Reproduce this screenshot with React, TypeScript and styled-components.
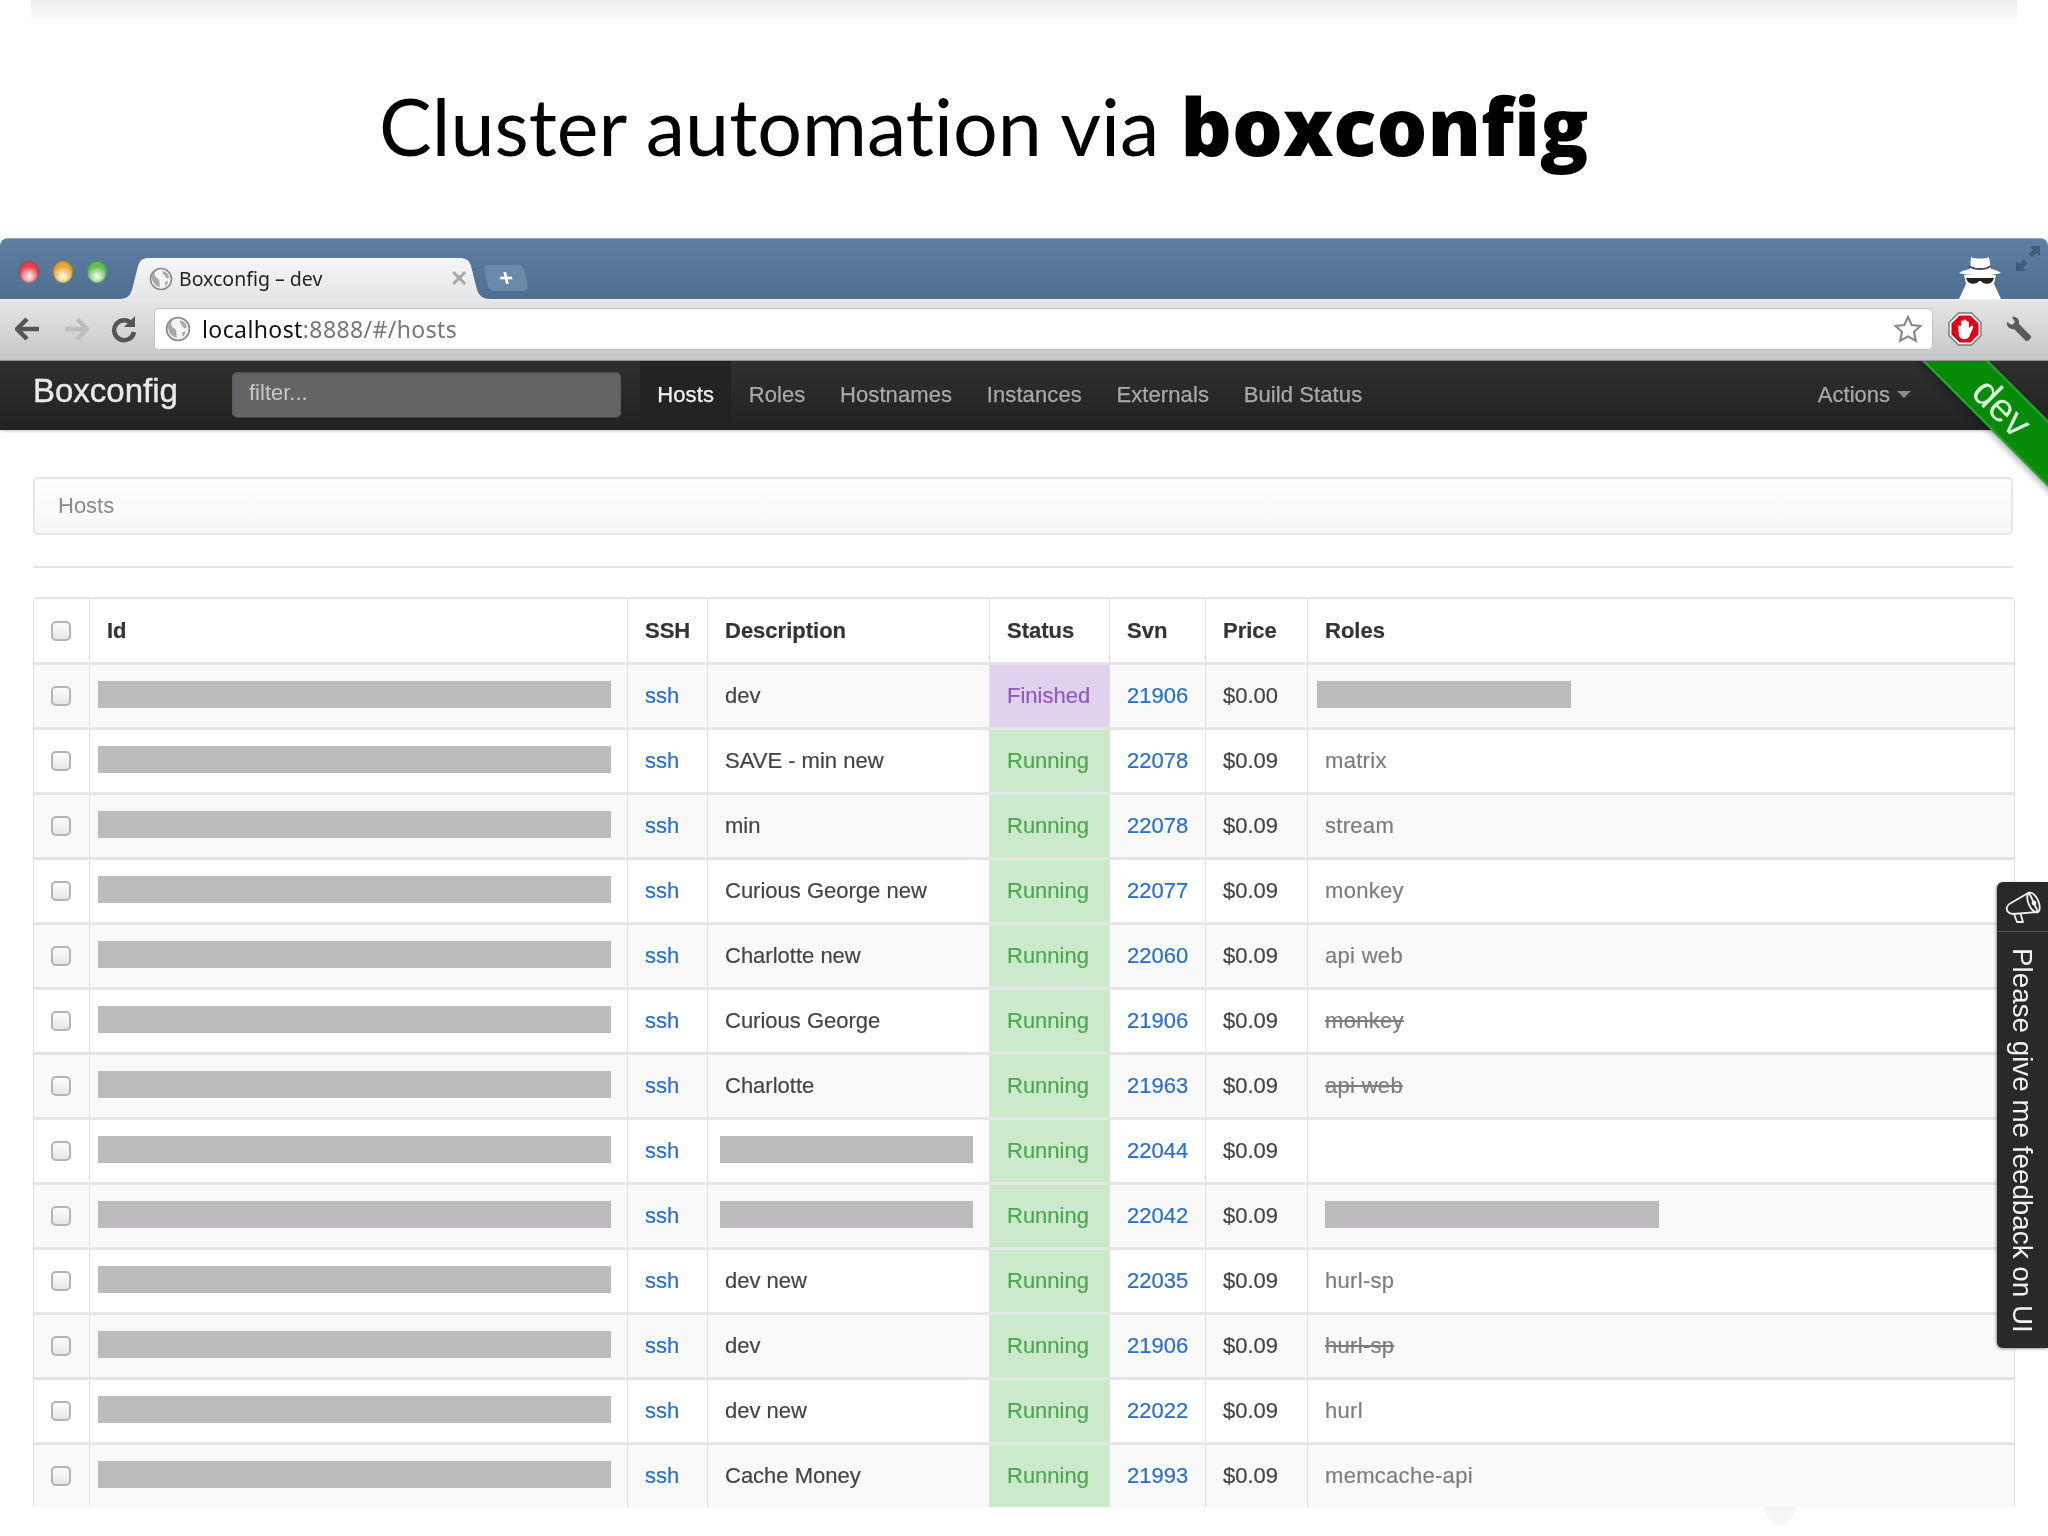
import React from "react";
import styled, { createGlobalStyle } from "styled-components";

interface HostRow {
  desc?: string;
  status: "Running" | "Finished";
  svn: string;
  price: string;
  role?: string;
  struck?: boolean;
  roleBlock?: { left: number; width: number };
}

const rows: HostRow[] = [
  { desc: "dev", status: "Finished", svn: "21906", price: "$0.00", roleBlock: { left: -8, width: 254 } },
  { desc: "SAVE - min new", status: "Running", svn: "22078", price: "$0.09", role: "matrix" },
  { desc: "min", status: "Running", svn: "22078", price: "$0.09", role: "stream" },
  { desc: "Curious George new", status: "Running", svn: "22077", price: "$0.09", role: "monkey" },
  { desc: "Charlotte new", status: "Running", svn: "22060", price: "$0.09", role: "api web" },
  { desc: "Curious George", status: "Running", svn: "21906", price: "$0.09", role: "monkey", struck: true },
  { desc: "Charlotte", status: "Running", svn: "21963", price: "$0.09", role: "api web", struck: true },
  { status: "Running", svn: "22044", price: "$0.09" },
  { status: "Running", svn: "22042", price: "$0.09", roleBlock: { left: 0, width: 334 } },
  { desc: "dev new", status: "Running", svn: "22035", price: "$0.09", role: "hurl-sp" },
  { desc: "dev", status: "Running", svn: "21906", price: "$0.09", role: "hurl-sp", struck: true },
  { desc: "dev new", status: "Running", svn: "22022", price: "$0.09", role: "hurl" },
  { desc: "Cache Money", status: "Running", svn: "21993", price: "$0.09", role: "memcache-api" },
];

const navLinks = ["Hosts", "Roles", "Hostnames", "Instances", "Externals", "Build Status"];
const columns = [55, 538, 80, 282, 120, 96, 102, 707];

const Globe: React.FC<{ size: number }> = ({ size }) => (
  <svg width={size} height={size} viewBox="0 0 24 24">
    <circle cx="12" cy="12" r="10.5" fill="#f4f4f4" stroke="#8a8a8a" strokeWidth="1.6" />
    <path d="M8 3c-2 2-3 4-2 6s3 2 4 4 0 4 1 7c-3 0-7-3-8-8s2-8 5-9z" fill="#a8a8a8" />
    <path d="M14 4c3 1 6 3 6 7-2 1-3 0-4-2s-3-2-2-5zM16 15l3-1c0 2-1 4-3 5z" fill="#a8a8a8" />
  </svg>
);

const GlobalStyle = createGlobalStyle`
  html, body {
    margin: 0;
    background: #fff;
  }
  body {
    font-family: "Liberation Sans", Arial, sans-serif;
    height: 1536px;
    overflow: hidden;
  }
`;

const TopBand = styled.div`
  height: 19px;
  margin: 0 31px;
  background: linear-gradient(#eeeeee, #fafafa);
`;

const Slide = styled.h1`
  height: 219px;
  margin: 0;
  padding: 58px 0 0 379px;
  box-sizing: border-box;
  font-family: Lato, "Open Sans", sans-serif;
  font-size: 79px;
  line-height: 96px;
  font-weight: 400;
  font-variant-ligatures: none;
  color: #000;
  b {
    font-family: "Open Sans", Lato, sans-serif;
    font-size: 80px;
    font-weight: 800;
    margin-left: 1px;
  }
`;

const Browser = styled.div`
  position: relative;
  height: 1298px;
  overflow: hidden;
  border-radius: 8px 8px 0 0;
  filter: blur(0.35px);
`;

const TitleBar = styled.div`
  height: 61px;
  display: flex;
  align-items: flex-end;
  padding-left: 19px;
  background: linear-gradient(#5e7fa1, #4e6e92);
  border-top: 1px solid #8aa3bc;
  box-sizing: border-box;
`;

const Lights = styled.div`
  display: flex;
  gap: 14px;
  margin-bottom: 16px;
`;

const Light = styled.span<{ $color: string }>`
  width: 20px;
  height: 22px;
  border-radius: 50%;
  background: radial-gradient(circle at 50% 70%, #fff 0, ${(p) => p.$color} 55%);
  box-shadow: inset 0 0 0 1px rgba(0, 0, 0, 0.18);
`;

const Tab = styled.div`
  width: 371px;
  height: 41px;
  margin-left: 12px;
  padding: 0 22px 0 30px;
  box-sizing: border-box;
  display: flex;
  align-items: center;
  gap: 6px;
  color: #222;
  background: linear-gradient(#f7f7f7, #e5e5e5);
  clip-path: path("M0 41 C10 41 12 36 14 28 L19 8 C21 2 24 0 30 0 L340 0 C347 0 350 2 352 8 L357 28 C359 36 362 41 371 41 Z");
`;

const TabLabel = styled.span`
  flex: 1;
  font-family: "Noto Sans", sans-serif;
  font-size: 19.5px;
`;

const TabClose = styled.span`
  color: #a8a8a8;
  font-size: 22px;
  font-weight: 700;
`;

const NewTab = styled.div`
  width: 40px;
  height: 26px;
  margin: 0 0 8px -4px;
  display: flex;
  align-items: center;
  justify-content: center;
  color: #fff;
  font-size: 24px;
  font-weight: 700;
  background: #6b8aa9;
  border-radius: 5px 5px 6px 6px;
  transform: skewX(12deg);
`;

const TitleRight = styled.div`
  margin-left: auto;
  align-self: stretch;
  display: flex;
  align-items: flex-end;
  gap: 10px;
  padding-right: 7px;
`;

const Fullscreen = styled.svg`
  align-self: flex-start;
  margin-top: 6px;
`;

const Toolbar = styled.div`
  height: 62px;
  display: flex;
  align-items: center;
  padding: 0 0 2px 15px;
  box-sizing: border-box;
  background: linear-gradient(#e6e6e6, #c6c6c6);
  border-top: 1px solid #e8eef2;
  border-bottom: 1px solid #9a9a9a;
`;

const NavButtons = styled.div`
  display: flex;
  align-items: center;
  gap: 22px;
`;

const AddressBar = styled.div`
  width: 1777px;
  height: 40px;
  margin-left: 18px;
  padding: 0 10px;
  box-sizing: border-box;
  display: flex;
  align-items: center;
  gap: 11px;
  background: #fff;
  border-radius: 4px;
  box-shadow: 0 0 0 1px #c4c4c4;
`;

const Url = styled.span`
  flex: 1;
  font-family: "Noto Sans", sans-serif;
  font-size: 23px;
  letter-spacing: 0.4px;
  color: #777;
  b {
    font-weight: 400;
    color: #111;
  }
`;

const StopSign = styled.svg`
  margin-left: 16px;
`;

const Wrench = styled.svg`
  margin-left: 24px;
`;

const NavBar = styled.div`
  height: 69px;
  display: flex;
  align-items: stretch;
  padding-left: 33px;
  background: linear-gradient(#2f2f2f, #222222);
  color: #a9a9a9;
  box-shadow: 0 1px 3px rgba(0, 0, 0, 0.25);
`;

const Brand = styled.div`
  width: 199px;
  line-height: 59px;
  font-size: 33px;
  color: #eaeaea;
  -webkit-text-stroke: 0.4px #eaeaea;
`;

const FilterInput = styled.div`
  width: 389px;
  height: 45px;
  margin-top: 11px;
  padding-left: 17px;
  box-sizing: border-box;
  font-size: 22px;
  line-height: 41px;
  color: #c8c8c8;
  background: #646365;
  border-radius: 5px;
  box-shadow: 0 1px 0 #444, inset 0 1px 2px rgba(0, 0, 0, 0.25);
`;

const NavLinks = styled.div`
  display: flex;
  margin-left: 19px;
`;

const NavLink = styled.a<{ $active?: boolean }>`
  padding: 0 17.3px;
  font-size: 22px;
  line-height: 67px;
  letter-spacing: 0.1px;
  -webkit-text-stroke: 0.25px currentColor;
  color: ${(p) => (p.$active ? "#f4f4f4" : "#a9a9a9")};
  background: ${(p) => (p.$active ? "#232323" : "transparent")};
`;

const Actions = styled.div`
  margin-left: auto;
  margin-right: 137px;
  padding-bottom: 2px;
  display: flex;
  align-items: center;
  gap: 7px;
  font-size: 22px;
  -webkit-text-stroke: 0.25px currentColor;
`;

const Caret = styled.span`
  width: 0;
  height: 0;
  border-left: 7px solid transparent;
  border-right: 7px solid transparent;
  border-top: 7px solid #8a8a8a;
`;

const RibbonClip = styled.div`
  position: absolute;
  top: 123px;
  right: 0;
  width: 150px;
  height: 150px;
  overflow: hidden;
  pointer-events: none;
`;

const Ribbon = styled.div`
  position: absolute;
  left: -26px;
  top: 23px;
  width: 260px;
  height: 47px;
  transform: rotate(45deg);
  display: flex;
  align-items: center;
  justify-content: center;
  box-sizing: border-box;
  font-size: 40px;
  color: #d8efd8;
  background: #078a0a;
  border-top: 2px solid #2fa32f;
  border-bottom: 2px solid #2fa32f;
  box-shadow: 0 3px 6px rgba(0, 0, 0, 0.3);
`;

const Content = styled.div`
  padding: 47px 35px 0 33px;
`;

const Breadcrumb = styled.div`
  height: 58px;
  padding-left: 23px;
  box-sizing: border-box;
  line-height: 53px;
  font-size: 22px;
  color: #8a8a8a;
  background: linear-gradient(#ffffff, #f7f7f7);
  border: 2px solid #e6e6e6;
  border-radius: 5px;
`;

const Rule = styled.hr`
  margin: 31px 0 29px;
  border: 0;
  border-top: 2px solid #e6e6e6;
`;

const Table = styled.table`
  width: 1980px;
  table-layout: fixed;
  border-collapse: separate;
  border-spacing: 0;
  font-size: 22px;
  color: #444;
  -webkit-text-stroke: 0.2px currentColor;
  border-top: 2px solid #e6e6e6;
  border-left: 1px solid #e2e2e2;
  border-right: 1px solid #e2e2e2;
  border-radius: 5px 5px 0 0;
`;

const Th = styled.th`
  height: 63px;
  padding: 0 0 0 17px;
  box-sizing: border-box;
  text-align: left;
  font-weight: 700;
  color: #333;
  border-left: 1px solid #e2e2e2;
  &:first-child {
    border-left: 0;
  }
`;

const Tr = styled.tr<{ $odd: boolean }>`
  background: ${(p) => (p.$odd ? "#f9f9f9" : "#fff")};
`;

const Td = styled.td<{ $bg?: string }>`
  height: 65px;
  padding: 0 0 0 17px;
  box-sizing: border-box;
  white-space: nowrap;
  border-top: 3px solid #e6e6e6;
  border-left: 1px solid #e2e2e2;
  background: ${(p) => p.$bg || "transparent"};
  &:first-child {
    border-left: 0;
  }
`;

const Checkbox = styled.span`
  display: block;
  width: 20px;
  height: 20px;
  box-sizing: border-box;
  border: 2px solid #b4b4b4;
  border-radius: 5px;
  background: linear-gradient(#fdfdfd, #e6e6e6);
`;

const Redacted = styled.div<{ $left: number; $width: number }>`
  height: 27px;
  width: ${(p) => p.$width}px;
  margin: -3px 0 0 ${(p) => p.$left}px;
  background: #bdbbbd;
`;

const SshLink = styled.a`
  color: #2a6fc9;
`;

const StatusText = styled.span<{ $finished: boolean }>`
  color: ${(p) => (p.$finished ? "#8d5bb8" : "#4fa650")};
`;

const Role = styled.span<{ $struck?: boolean }>`
  color: #7d7d7d;
  letter-spacing: 0.3px;
  text-decoration: ${(p) => (p.$struck ? "line-through" : "none")};
`;

const FeedbackTab = styled.div`
  position: absolute;
  top: 644px;
  right: 0;
  width: 51px;
  height: 466px;
  box-sizing: border-box;
  display: flex;
  flex-direction: column;
  align-items: center;
  color: #f2f2f2;
  background: #29292c;
  border-radius: 6px 0 0 6px;
  box-shadow: -1px 1px 3px rgba(0, 0, 0, 0.4);
`;

const FeedbackIcon = styled.div`
  width: 100%;
  height: 49px;
  flex: none;
  display: flex;
  align-items: center;
  justify-content: center;
  border-bottom: 1px solid #555;
`;

const FeedbackText = styled.div`
  margin-top: 16px;
  writing-mode: vertical-rl;
  white-space: nowrap;
  font-size: 27.8px;
  line-height: 51px;
`;

const GhostMark = styled.svg`
  position: absolute;
  left: 1760px;
  top: 1269px;
`;

const App: React.FC = () => {
  return (
    <>
      <GlobalStyle />
      <TopBand />
      <Slide>
        Cluster automation via <b>boxconfig</b>
      </Slide>
      <Browser>
        <TitleBar>
          <Lights>
            <Light $color="#e8404a" />
            <Light $color="#eba52c" />
            <Light $color="#5fc051" />
          </Lights>
          <Tab>
            <Globe size={24} />
            <TabLabel>Boxconfig – dev</TabLabel>
            <TabClose>✕</TabClose>
          </Tab>
          <NewTab>+</NewTab>
          <TitleRight>
            <svg width="50" height="46" viewBox="0 0 50 46">
              <path d="M15 16 L16 4 C20 6 30 6 34 4 L36 16 C41 17 44 18 46 20 C38 23 12 23 4 20 C6 18 10 17 15 16Z" fill="#fff" />
              <path d="M14 13 C20 17 30 17 36 13" stroke="#4c4c4c" strokeWidth="2" fill="none" />
              <path d="M9 22 L41 22 L39 31 L46 46 L4 46 L11 31Z" fill="#fff" />
              <path d="M11 25 L39 25 L37 29 C33 32 28 31 26 28 L24 28 C22 31 17 32 13 29Z" fill="#222" />
            </svg>
            <Fullscreen width="26" height="27" viewBox="0 0 26 27">
              <path d="M15 1 L25 1 L25 11 L21.5 8 L17 12.5 L13.5 9 L18 4.5Z" fill="#3e5c7c" />
              <path d="M11 26 L1 26 L1 16 L4.5 19 L9 14.5 L12.5 18 L8 22.5Z" fill="#3e5c7c" />
            </Fullscreen>
          </TitleRight>
        </TitleBar>
        <Toolbar>
          <NavButtons>
            <svg width="26" height="26" viewBox="0 0 26 26">
              <path d="M12 3 L2 13 L12 23 M3 13 L24 13" stroke="#555" strokeWidth="4.5" fill="none" />
            </svg>
            <svg width="26" height="26" viewBox="0 0 26 26">
              <path d="M14 3 L24 13 L14 23 M23 13 L2 13" stroke="#bdbdbd" strokeWidth="4.5" fill="none" />
            </svg>
            <svg width="26" height="28" viewBox="0 0 26 28">
              <path d="M21 9 A10 10 0 1 0 23 17" stroke="#555" strokeWidth="4.5" fill="none" />
              <path d="M24 1 L24 12 L13 12Z" fill="#555" />
            </svg>
          </NavButtons>
          <AddressBar>
            <Globe size={26} />
            <Url>
              <b>localhost</b>:8888/#/hosts
            </Url>
            <svg width="28" height="28" viewBox="0 0 28 28">
              <path d="M14 2 L17.7 10 L26.5 11 L20 17 L21.8 25.8 L14 21.4 L6.2 25.8 L8 17 L1.5 11 L10.3 10Z" fill="#fff" stroke="#8a8a8a" strokeWidth="2.2" />
            </svg>
          </AddressBar>
          <StopSign width="34" height="34" viewBox="0 0 34 34">
            <path d="M10.5 1 L23.5 1 L33 10.5 L33 23.5 L23.5 33 L10.5 33 L1 23.5 L1 10.5Z" fill="#fff" stroke="#777" strokeWidth="1.4" />
            <path d="M11.5 3.5 L22.5 3.5 L30.5 11.5 L30.5 22.5 L22.5 30.5 L11.5 30.5 L3.5 22.5 L3.5 11.5Z" fill="#e5001a" />
            <path d="M10 15 C10 13 13 13 13 15 L13 10 C13 8 15.5 8 15.5 10 L15.5 9 C15.5 7 18.5 7 18.5 9 L18.5 10 C18.5 9 21 9 21 11 L21 16 L23 14 C25 13 26 15 25 16 L21 25 C19 28 13 28 11 24Z" fill="#fff" />
          </StopSign>
          <Wrench width="26" height="26" viewBox="0 0 26 26">
            <path d="M1 6 L6 9 L9 6 L6 1 C10 0 14 3 13 8 L25 20 C26 22 22 26 20 25 L8 13 C4 14 0 10 1 6Z" fill="#5a5a5a" />
          </Wrench>
        </Toolbar>
        <NavBar>
          <Brand>Boxconfig</Brand>
          <FilterInput>filter...</FilterInput>
          <NavLinks>
            {navLinks.map((link, i) => (
              <NavLink key={link} $active={i === 0}>
                {link}
              </NavLink>
            ))}
          </NavLinks>
          <Actions>
            Actions
            <Caret />
          </Actions>
        </NavBar>
        <RibbonClip>
          <Ribbon>dev</Ribbon>
        </RibbonClip>
        <Content>
          <Breadcrumb>Hosts</Breadcrumb>
          <Rule />
          <Table>
            <colgroup>
              {columns.map((w, i) => (
                <col key={i} width={w} />
              ))}
            </colgroup>
            <thead>
              <tr>
                <Th>
                  <Checkbox />
                </Th>
                <Th>Id</Th>
                <Th>SSH</Th>
                <Th>Description</Th>
                <Th>Status</Th>
                <Th>Svn</Th>
                <Th>Price</Th>
                <Th>Roles</Th>
              </tr>
            </thead>
            <tbody>
              {rows.map((row, i) => (
                <Tr key={i} $odd={i % 2 === 0}>
                  <Td>
                    <Checkbox />
                  </Td>
                  <Td>
                    <Redacted $left={-9} $width={513} />
                  </Td>
                  <Td>
                    <SshLink>ssh</SshLink>
                  </Td>
                  <Td>{row.desc ? row.desc : <Redacted $left={-5} $width={253} />}</Td>
                  <Td $bg={row.status === "Finished" ? "#e0d2ee" : "#cbe9cb"}>
                    <StatusText $finished={row.status === "Finished"}>{row.status}</StatusText>
                  </Td>
                  <Td>
                    <SshLink>{row.svn}</SshLink>
                  </Td>
                  <Td>{row.price}</Td>
                  <Td>
                    {row.roleBlock && <Redacted $left={row.roleBlock.left} $width={row.roleBlock.width} />}
                    {row.role && <Role $struck={row.struck}>{row.role}</Role>}
                  </Td>
                </Tr>
              ))}
            </tbody>
          </Table>
        </Content>
        <FeedbackTab>
          <FeedbackIcon>
            <svg width="36" height="34" viewBox="0 0 36 34" fill="none" stroke="#f2f2f2" strokeWidth="1.8" strokeLinejoin="round">
              <path d="M6 13 L24 2.5 L33 22 L8 24 C3 24 1 20 2 17 C2.5 15 4 14 6 13Z" />
              <ellipse cx="28.5" cy="12.5" rx="5" ry="10.5" transform="rotate(-24 28.5 12.5)" />
              <path d="M9 24 L12 32 L18 32 L15.5 23.5" />
              <circle cx="29" cy="13" r="2.4" fill="#f2f2f2" stroke="none" />
            </svg>
          </FeedbackIcon>
          <FeedbackText>Please give me feedback on UI</FeedbackText>
        </FeedbackTab>
        <GhostMark width="40" height="18" viewBox="0 0 40 18">
          <path d="M4 0 L36 0 C34 12 26 18 20 18 C14 18 6 12 4 0Z" fill="#f6f6f6" />
        </GhostMark>
      </Browser>
    </>
  );
};

export default App;
